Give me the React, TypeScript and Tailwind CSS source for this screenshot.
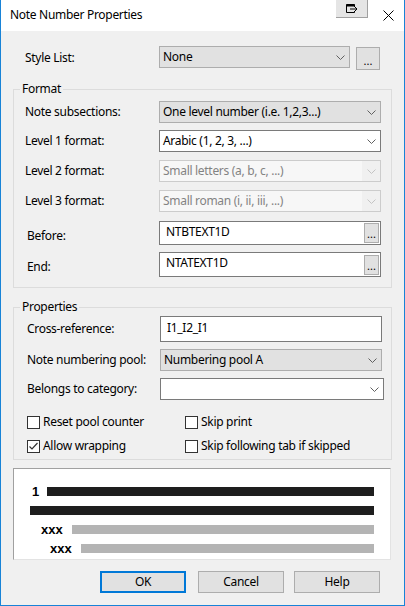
import React from "react";

type Variant = "gray" | "white" | "disabled";

const comboStyles: Record<Variant, string> = {
  gray: "border-[#adadad] bg-[#e1e1e1] text-black",
  white: "border-[#7a7a7a] bg-white text-black",
  disabled: "border-[#cccccc] bg-[#f7f7f7] text-[#838383]",
};

function Chevron({ disabled }: { disabled?: boolean }) {
  return (
    <svg width="9" height="5" viewBox="0 0 9 5" className="shrink-0">
      <path d="M0.5 0.5 L4.5 4.5 L8.5 0.5" fill="none" stroke={disabled ? "#c4c4c4" : "#606060"} strokeWidth="1" />
    </svg>
  );
}

function Combo({ value, variant, className }: { value: string; variant: Variant; className: string }) {
  return (
    <div className={`flex items-center border ${comboStyles[variant]} ${className}`}>
      <span className="flex-1 truncate pl-[3px] leading-[16px]">{value}</span>
      <span className={`flex h-full w-[18px] items-center justify-center ${variant === "disabled" ? "bg-[#f0f0f0]" : ""}`}>
        <Chevron disabled={variant === "disabled"} />
      </span>
    </div>
  );
}

function DotsButton({ className }: { className: string }) {
  return (
    <div className={`flex items-end justify-center border border-[#adadad] bg-[#e1e1e1] pb-[3px] text-[11px] leading-none tracking-normal ${className}`}>
      ...
    </div>
  );
}

function TextWithDots({ value }: { value: string }) {
  return (
    <div className="flex h-full w-[222px] items-center border border-[#7a7a7a] bg-white">
      <span className="flex-1 self-start pt-[2px] pl-[6px] leading-[16px]">{value}</span>
      <DotsButton className="mr-[1px] h-[20px] w-[15px]" />
    </div>
  );
}

function Checkbox({ label, checked }: { label: string; checked?: boolean }) {
  return (
    <div className="flex h-[16px] items-center">
      <span className="flex h-[13px] w-[13px] shrink-0 items-center justify-center border border-[#333333] bg-white">
        {checked && (
          <svg width="11" height="11" viewBox="0 0 11 11">
            <path d="M1.5 5.5 L4 8 L9.5 2" fill="none" stroke="#333333" strokeWidth="1.2" />
          </svg>
        )}
      </span>
      <span className="ml-[3px] leading-[16px]">{label}</span>
    </div>
  );
}

function Bar({ className }: { className: string }) {
  return <div className={`h-[9px] ${className}`} />;
}

export default function App() {
  return (
    <div className="flex h-[606px] w-[405px] flex-col border-x border-b border-[#1883d7] bg-[#f0f0f0] font-['Noto_Sans',sans-serif] text-[12px] tracking-[-0.3px] text-black">
      {/* title bar */}
      <div className="flex h-[31px] shrink-0 items-start bg-white">
        <span className="mt-[7px] ml-[9px] leading-[16px]">Note Number Properties</span>
        <div className="ml-auto flex h-[18px] w-[32px] items-center justify-center border-r border-b border-[#a0a0a0] bg-[#e5e5e5]">
          <svg width="12" height="9" viewBox="0 0 12 9">
            <path d="M0.5 8.5 V0.5 H8.5 V3" fill="none" stroke="#000" strokeWidth="1" />
            <path d="M0.5 1.5 H8.5" stroke="#000" strokeWidth="2" />
            <path d="M0.5 8.5 H8.5 V7" fill="none" stroke="#000" strokeWidth="1" />
            <path d="M4 5 H11 M9 3 L11 5 L9 7" fill="none" stroke="#000" strokeWidth="1" />
          </svg>
        </div>
        <div className="mt-[10px] mr-[10px] ml-[15px] flex h-[11px] w-[11px]">
          <svg width="11" height="11" viewBox="0 0 11 11">
            <path d="M0.5 0.5 L10.5 10.5 M10.5 0.5 L0.5 10.5" stroke="#000" strokeWidth="1" />
          </svg>
        </div>
      </div>

      <div className="flex flex-col pl-[12px]">
        {/* style list */}
        <div className="mt-[15px] flex h-[24px] items-start">
          <span className="w-[146px] self-center pl-[12px] leading-[16px]">Style List:</span>
          <Combo value="None" variant="gray" className="h-[22px] w-[191px]" />
          <DotsButton className="mt-[1px] ml-[6px] h-[23px] w-[24px]" />
        </div>

        {/* format group */}
        <fieldset className="mt-[11px] w-[379px] border border-[#dcdcdc] px-0 pt-[4px] pb-[10px]">
          <legend className="ml-[6px] px-[2px] leading-[16px]">Format</legend>
          <div className="flex h-[22px] items-center">
            <span className="w-[145px] pl-[11px] leading-[16px]">Note subsections:</span>
            <Combo value="One level number (i.e. 1,2,3...)" variant="gray" className="h-[22px] w-[222px]" />
          </div>
          <div className="mt-[7px] flex h-[22px] items-center">
            <span className="w-[145px] pl-[11px] leading-[16px]">Level 1 format:</span>
            <Combo value="Arabic (1, 2, 3, ...)" variant="white" className="h-[22px] w-[222px]" />
          </div>
          <div className="mt-[8px] flex h-[22px] items-center">
            <span className="w-[145px] pl-[11px] leading-[16px]">Level 2 format:</span>
            <Combo value="Small letters (a, b, c, ...)" variant="disabled" className="h-[22px] w-[222px]" />
          </div>
          <div className="mt-[8px] flex h-[22px] items-center">
            <span className="w-[145px] pl-[11px] leading-[16px]">Level 3 format:</span>
            <Combo value="Small roman (i, ii, iii, ...)" variant="disabled" className="h-[22px] w-[222px]" />
          </div>
          <div className="mt-[9px] flex h-[24px] items-center">
            <span className="w-[145px] pt-[6px] pl-[13px] leading-[16px]">Before:</span>
            <TextWithDots value="NTBTEXT1D" />
          </div>
          <div className="mt-[7px] flex h-[25px] items-center">
            <span className="w-[145px] pt-[4px] pl-[13px] leading-[16px]">End:</span>
            <TextWithDots value="NTATEXT1D" />
          </div>
        </fieldset>

        {/* properties group */}
        <fieldset className="mt-[11px] w-[379px] border border-[#dcdcdc] px-0 pt-[1px] pb-[5px]">
          <legend className="ml-[6px] px-[2px] leading-[16px]">Properties</legend>
          <div className="flex h-[26px] items-center">
            <span className="w-[146px] pl-[13px] leading-[16px]">Cross-reference:</span>
            <div className="flex h-full w-[222px] items-start border border-[#7a7a7a] bg-white pt-[3px] pl-[6px] leading-[16px]">I1_I2_I1</div>
          </div>
          <div className="mt-[7px] flex h-[22px] items-center">
            <span className="w-[146px] pl-[13px] leading-[16px]">Note numbering pool:</span>
            <Combo value="Numbering pool A" variant="gray" className="h-[22px] w-[222px]" />
          </div>
          <div className="mt-[7px] flex h-[22px] items-center">
            <span className="w-[146px] pl-[13px] leading-[16px]">Belongs to category:</span>
            <Combo value="" variant="white" className="h-[22px] w-[224px]" />
          </div>
          <div className="mt-[14px] flex pl-[13px]">
            <div className="w-[158px]">
              <Checkbox label="Reset pool counter" />
            </div>
            <Checkbox label="Skip print" />
          </div>
          <div className="mt-[8px] flex pl-[13px]">
            <div className="w-[158px]">
              <Checkbox label="Allow wrapping" checked />
            </div>
            <Checkbox label="Skip following tab if skipped" />
          </div>
        </fieldset>

        {/* preview */}
        <div className="mt-[8px] flex h-[92px] w-[378px] flex-col gap-[10px] border-t border-r border-b border-l border-t-[#a0a0a0] border-r-[#e3e3e3] border-b-[#e3e3e3] border-l-[#a0a0a0] bg-white pt-[18px] font-['Liberation_Sans',Arial,sans-serif] font-bold tracking-normal">
          <div className="flex h-[9px] items-center">
            <span className="ml-[18px] w-[15px] text-[13px] leading-none">1</span>
            <Bar className="w-[327px] bg-[#1e1e1e]" />
          </div>
          <div className="flex h-[9px] items-center">
            <Bar className="ml-[16px] w-[344px] bg-[#1e1e1e]" />
          </div>
          <div className="flex h-[9px] items-center">
            <span className="ml-[27px] w-[31px] text-[13px] leading-none">xxx</span>
            <Bar className="w-[302px] bg-[#b4b4b4]" />
          </div>
          <div className="flex h-[9px] items-center">
            <span className="ml-[36px] w-[31px] text-[13px] leading-none">xxx</span>
            <Bar className="w-[293px] bg-[#b4b4b4]" />
          </div>
        </div>

        {/* buttons */}
        <div className="mt-[11px] flex h-[22px]">
          <button className="ml-[87px] flex h-[22px] w-[86px] items-center justify-center border-2 border-[#0078d7] bg-[#e1e1e1]">OK</button>
          <button className="ml-[12px] flex h-[22px] w-[86px] items-center justify-center border border-[#adadad] bg-[#e1e1e1]">Cancel</button>
          <button className="ml-[10px] flex h-[22px] w-[86px] items-center justify-center border border-[#adadad] bg-[#e1e1e1]">Help</button>
        </div>
      </div>
    </div>
  );
}
